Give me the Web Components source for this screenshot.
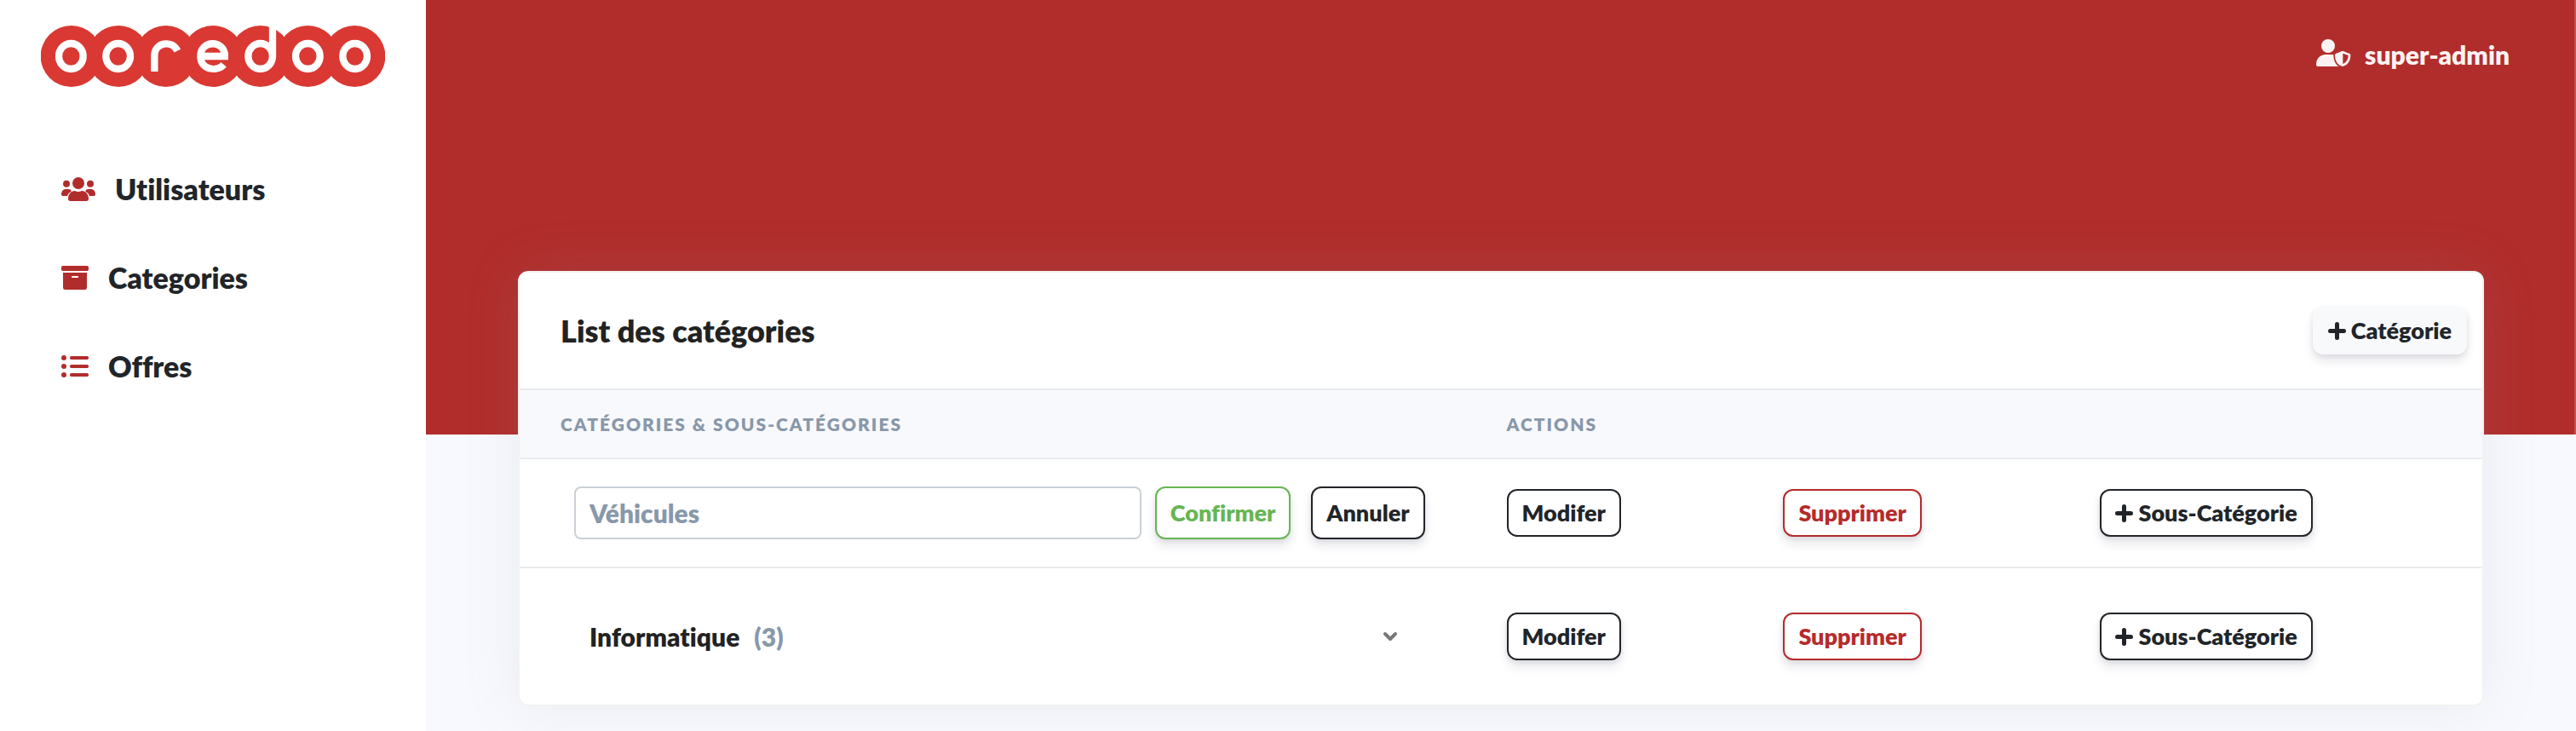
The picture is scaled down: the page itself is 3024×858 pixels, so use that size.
<!DOCTYPE html>
<html lang="fr">
<head>
<meta charset="utf-8">
<title>Catégories</title>
<style>
body { margin: 0; background: #f8f9fe; font-family: Lato, "Open Sans", sans-serif; font-weight: 800; font-variant-ligatures: none; color: #212529; }
</style>
</head>
<body>
<admin-app></admin-app>

<template id="t-logo">
<style>:host { display: block; } svg { display: block; width: 404px; height: 72px; }</style>
<svg viewBox="144 90 1212 216" role="img" aria-label="ooredoo">
  <g fill="#da3832"><circle cx="251" cy="198" r="108"/><circle cx="417" cy="198" r="108"/><circle cx="584" cy="198" r="108"/><circle cx="750" cy="198" r="108"/><circle cx="917" cy="198" r="108"/><circle cx="1084" cy="198" r="108"/><circle cx="1249" cy="198" r="108"/></g>
  <g fill="none" stroke="#fff" stroke-width="25">
    <ellipse cx="250" cy="198" rx="43" ry="45"/><ellipse cx="416" cy="198" rx="43" ry="45"/>
    <path d="M544 252V196C544 150 605 138 625 179"/>
    <path d="M709 198H804M788 227C764 255 706 246 706 198C706 140 791 138 792 198"/>
    <ellipse cx="917" cy="198" rx="43" ry="45"/><path d="M960 92V198"/>
    <ellipse cx="1084" cy="198" rx="43" ry="45"/><ellipse cx="1250" cy="198" rx="43" ry="45"/>
  </g>
</svg>
</template>

<template id="t-nav-item">
<style>
:host { display: block; }
a { display: flex; align-items: center; gap: 23px; height: 40px; color: inherit; text-decoration: none; font-size: 34px; line-height: 40px; }
::slotted(svg) { display: block; fill: #b12d2b; }
</style>
<a href="#"><slot name="icon"></slot><span><slot></slot></span></a>
</template>

<template id="t-side-nav">
<style>
:host { display: block; box-sizing: border-box; background: #fff; padding: 30px 48px; }
nav { display: flex; flex-direction: column; gap: 64px; padding: 100px 24px 0; }
</style>
<brand-logo></brand-logo>
<nav>
  <nav-item><svg slot="icon" width="40" height="28" viewBox="96 84 120 84"><circle cx="156" cy="105" r="21"/><circle cx="114" cy="107" r="12"/><circle cx="198" cy="107" r="12"/><path d="M144 132C151 136 161 136 168 132C182 132 192 144 192 160Q192 168 184 168H128Q120 168 120 160C120 144 130 132 144 132ZM112 126H120Q126 126 130 129Q130 132 131 134Q121 138 117 150H101Q96 150 96 145C96 134 102 126 112 126ZM200 126H192Q186 126 182 129Q182 132 181 134Q191 138 195 150H211Q216 150 216 145C216 134 210 126 200 126Z"/></svg>Utilisateurs</nav-item>
  <nav-item><svg slot="icon" width="32" height="28" viewBox="96 396 96 84"><rect x="96" y="396" width="96" height="18" rx="5"/><path fill-rule="evenodd" d="M102 420H186V473Q186 480 179 480H109Q102 480 102 473ZM134 432Q132 432 132 435T134 438H154Q156 438 156 435T154 432Z"/></svg>Categories</nav-item>
  <nav-item><svg slot="icon" width="32" height="26" viewBox="96 711 96 78"><circle cx="105" cy="720" r="9"/><circle cx="105" cy="750" r="9"/><circle cx="105" cy="780" r="9"/><rect x="126" y="714" width="66" height="12" rx="5"/><rect x="126" y="744" width="66" height="12" rx="5"/><rect x="126" y="774" width="66" height="12" rx="5"/></svg>Offres</nav-item>
</nav>
</template>

<template id="t-top-band">
<style>
:host { display: block; box-sizing: border-box; height: 510px; background: #b12d2b; border-right: 2px solid #c15452; padding: 44px 76px; }
a { display: flex; justify-content: flex-end; align-items: center; gap: 16px; color: #fbf3f3; text-decoration: none; font-size: 30px; line-height: 40px; }
svg { display: block; fill: currentColor; margin-bottom: 4px; }
</style>
<a href="#"><svg width="41" height="32" viewBox="170 78 123 96"><circle cx="212" cy="102" r="24"/><path d="M203 132H221Q226 132 231 133C231 150 236 165 249 174H176Q170 174 170 167C170 147 184 132 203 132Z"/><path fill-rule="evenodd" d="M263 119L288 129Q291 130 291 134C291 154 281 169 263 174C245 169 236 154 236 134Q236 130 239 129ZM264 128V165C276 160 283 149 283 135Z"/></svg><span>super-admin</span></a>
</template>

<template id="t-action-button">
<style>
:host { display: inline-block; vertical-align: middle; --c: #212529; --h: 56px; --shadow: 0 8px 12px rgba(50,50,93,.11), 0 2px 6px rgba(0,0,0,.08); }
:host([tone="green"]) { --c: #66b552; }
:host([tone="red"]) { --c: #b52b2b; }
:host([size="tall"]) { --h: 62px; }
:host([flat]) { --shadow: none; }
button { display: flex; align-items: center; justify-content: center; gap: 6px; box-sizing: border-box; height: var(--h); padding: 0 16px; border: 2px solid var(--c); border-radius: 12px; background: #fff; color: var(--c); font: inherit; font-variant-ligatures: none; font-size: 27px; line-height: 36px; white-space: nowrap; box-shadow: var(--shadow); }
:host([tone="light"]) button { background: #f8f9fb; border-color: #f8f9fb; }
svg { display: none; fill: currentColor; }
:host([plus]) svg { display: block; }
</style>
<button type="button"><svg width="21" height="21" viewBox="0 0 42 42"><path d="M16 5a5 5 0 0 1 10 0V16H37a5 5 0 0 1 0 10H26V37a5 5 0 0 1-10 0V26H5a5 5 0 0 1 0-10H16Z"/></svg><span><slot></slot></span></button>
</template>

<template id="t-category-card">
<style>
:host { display: block; background: #fff; border: 2px solid #f2f2f2; border-radius: 12px; box-shadow: 0 0 64px rgba(136,152,170,.15); }
header { display: flex; align-items: center; justify-content: space-between; height: 136px; padding: 0 18px 0 48px; }
h3 { margin: 0; font: inherit; font-variant-ligatures: none; font-size: 36px; line-height: 48px; color: #222; }
table { width: 100%; table-layout: fixed; border-collapse: separate; border-spacing: 0; }
th, td { box-sizing: border-box; padding: 0 48px; border-top: 2px solid #e9ecef; text-align: left; font-weight: inherit; }
th { height: 81px; background: #f8f9fc; color: #8898aa; font-size: 21px; line-height: 32px; letter-spacing: 2px; text-transform: uppercase; }
td { height: 128px; vertical-align: middle; }
tbody tr:last-child td { height: 162px; }
td:first-child { padding-left: 64px; }
.edit { display: flex; align-items: center; gap: 24px; }
.field { display: flex; flex: 1; gap: 16px; }
input { flex: 1; min-width: 0; box-sizing: border-box; height: 62px; padding: 0 16px; border: 2px solid #cad1d7; border-radius: 8px; background: #fff; font: inherit; font-size: 30px; line-height: 40px; }
input::placeholder { color: #8898aa; opacity: 1; }
summary { display: flex; align-items: center; gap: 17px; padding: 0 32px 0 18px; font-size: 30px; line-height: 40px; color: #222; list-style: none; }
.count { flex: 1; color: #8898aa; }
</style>
<header><h3>List des catégories</h3><action-button tone="light" plus>Catégorie</action-button></header>
<table>
  <colgroup><col style="width:48.200%"><col style="width:14.100%"><col style="width:16.150%"><col></colgroup>
  <thead><tr><th scope="col">Catégories &amp; Sous-Catégories</th><th scope="col" colspan="3">Actions</th></tr></thead>
  <tbody>
    <tr>
      <td><div class="edit"><div class="field"><input type="text" placeholder="Véhicules" aria-label="Nom de la catégorie"><action-button tone="green" size="tall">Confirmer</action-button></div><action-button size="tall">Annuler</action-button></div></td>
      <td><action-button flat>Modifer</action-button></td>
      <td><action-button tone="red">Supprimer</action-button></td>
      <td><action-button plus>Sous-Catégorie</action-button></td>
    </tr>
    <tr>
      <td><details><summary><span>Informatique</span><span class="count">(3)</span><svg width="18" height="12" viewBox="0 0 18 12" fill="none" stroke="#777" stroke-width="4" stroke-linecap="round" stroke-linejoin="round" aria-hidden="true"><path d="M3 3L9 9L15 3"/></svg></summary></details></td>
      <td><action-button>Modifer</action-button></td>
      <td><action-button tone="red">Supprimer</action-button></td>
      <td><action-button plus>Sous-Catégorie</action-button></td>
    </tr>
  </tbody>
</table>
</template>

<template id="t-app">
<style>
:host { display: grid; grid-template-columns: 500px minmax(0, 1fr); min-height: 100vh; }
main { padding-bottom: 29px; }
category-card { margin: -192px 108px 0; }
</style>
<side-nav></side-nav>
<main><top-band></top-band><category-card></category-card></main>
</template>

<script>
const define = (name, templateId) => {
  customElements.define(name, class extends HTMLElement {
    constructor() {
      super();
      this.attachShadow({ mode: "open" })
        .append(document.getElementById(templateId).content.cloneNode(true));
    }
  });
};
define("brand-logo", "t-logo");
define("nav-item", "t-nav-item");
define("side-nav", "t-side-nav");
define("top-band", "t-top-band");
define("action-button", "t-action-button");
define("category-card", "t-category-card");
define("admin-app", "t-app");
</script>
</body>
</html>
